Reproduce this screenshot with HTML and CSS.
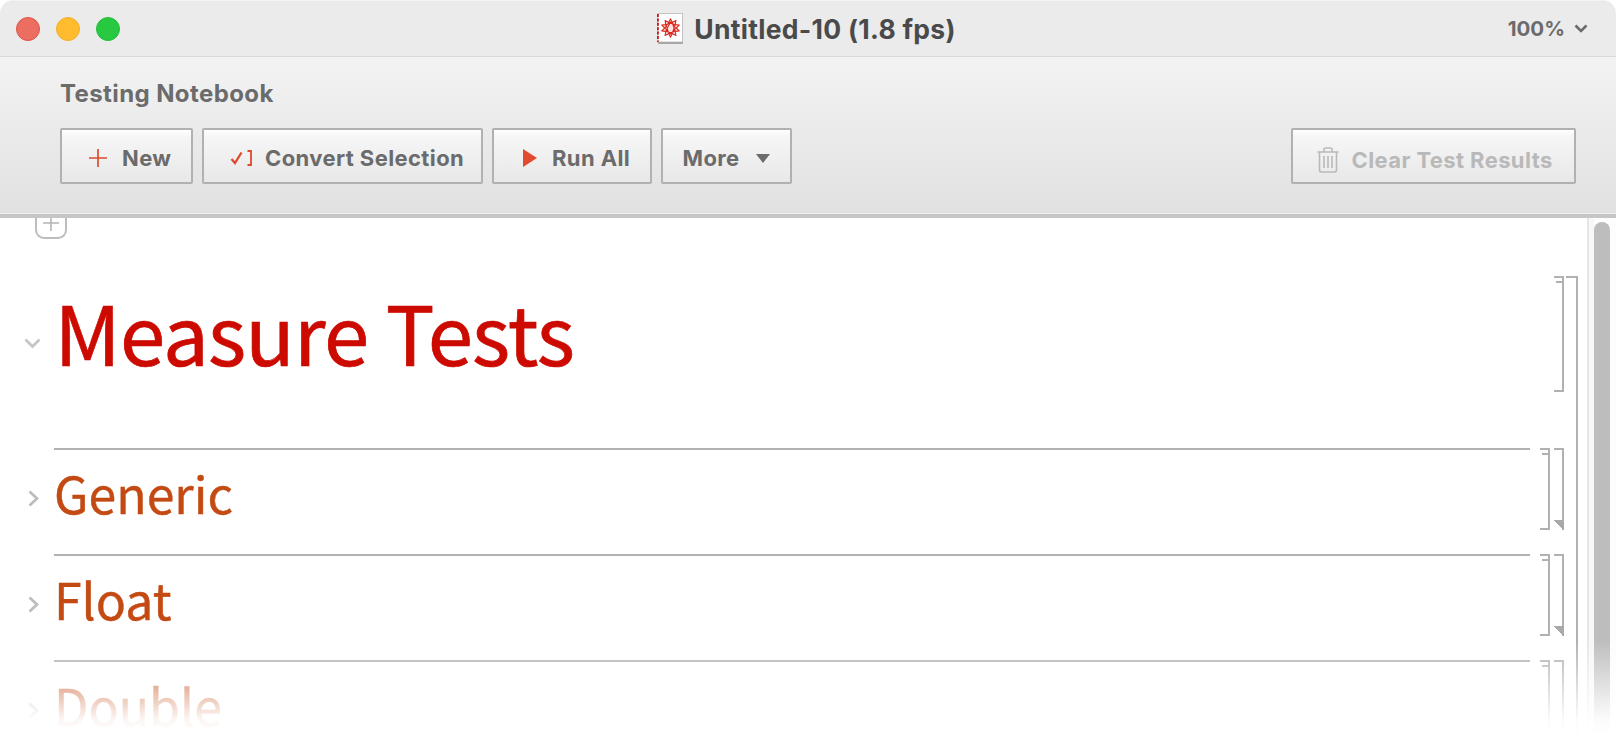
FILE: index.html
```html
<!DOCTYPE html>
<html lang="en">
<head>
<meta charset="utf-8">
<title>Untitled-10 (1.8 fps)</title>
<link rel="stylesheet" href="styles.css">
</head>
<body>
<div class="window">
  <header class="titlebar">
    <div class="lights">
      <span class="light close"></span>
      <span class="light minimize"></span>
      <span class="light zoom"></span>
    </div>
    <div class="doc-title">
      <svg class="doc-icon" width="26" height="31" viewBox="0 0 26 31">
        <rect x="1" y="0.5" width="24.500" height="28.5" fill="#fff" stroke="#c4c4c4"/>
        <rect x="1" y="29" width="25" height="2" fill="#a8a8a8"/>
        <path d="M0.8 1V29" stroke="#cc1414" stroke-width="2" stroke-dasharray="3 1.4"/>
        <g transform="translate(13.5 15) scale(.88) translate(-13.5 -15)" fill="#fbe3df" stroke="#d9281e" stroke-width="1.2" stroke-linejoin="round">
          <path d="M13.500 4.500L15.500 8.820 19.670 6.510 18.760 11.180 23.490 11.760 20 15 23.490 18.240 18.760 18.820 19.670 23.490 15.500 21.180 13.500 25.500 11.500 21.180 7.330 23.490 8.240 18.820 3.510 18.240 7 15 3.510 11.760 8.240 11.180 7.330 6.510 11.500 8.820z"/>
          <path d="M11.500 8.820L18.760 11.180 15.500 21.180 8.240 18.820 13.500 8 20 15 13.500 22 7 15zM8.240 11.180L15.500 8.820 18.760 18.820 11.500 21.180z" fill="none"/>
        </g>
      </svg>
      <span class="doc-name">Untitled-10 (1.8 fps)</span>
    </div>
    <div class="zoom-menu">
      <span>100%</span>
      <svg width="14" height="9" viewBox="0 0 14 9"><path d="M1.500 1.500L7 7l5.500-5.500" fill="none" stroke="#6b6b6b" stroke-width="2.600"/></svg>
    </div>
  </header>

  <section class="toolbar">
    <div class="toolbar-title">Testing Notebook</div>
    <div class="actions">
      <button class="btn btn-new">
        <svg width="18" height="18" viewBox="0 0 18 18"><path d="M9 0V18M0 9H18" stroke="#dd4a2e" stroke-width="1.7"/></svg>
        <span>New</span>
      </button>
      <button class="btn btn-convert">
        <svg width="22" height="18" viewBox="0 0 22 18"><path d="M1.500 10L5 14 11.500 3.500" fill="none" stroke="#dd4a2e" stroke-width="2.300"/><path d="M17.500 2H21V16H17.500" fill="none" stroke="#dd4a2e" stroke-width="1.800"/></svg>
        <span>Convert Selection</span>
      </button>
      <button class="btn btn-run">
        <svg width="14" height="18" viewBox="0 0 14 18"><path d="M0 0L14 9 0 18z" fill="#e04b2d"/></svg>
        <span>Run All</span>
      </button>
      <button class="btn btn-more">
        <span>More</span>
        <svg width="14" height="9" viewBox="0 0 14 9"><path d="M0 0H14L7 9z" fill="#6b6b6b"/></svg>
      </button>
      <button class="btn btn-clear">
        <svg width="22" height="26" viewBox="0 0 22 26" fill="none" stroke="#b9b9b9" stroke-width="1.600"><path d="M0.500 5H21.500M7 4.500V2.500Q7 1 8.500 1H13.500Q15 1 15 2.500V4.500M2.500 5.500V23Q2.500 25 4.500 25H17.500Q19.500 25 19.500 23V5.500M7 9V21M11 9V21M15 9V21"/></svg>
        <span>Clear Test Results</span>
      </button>
    </div>
  </section>

  <main class="notebook">
    <div class="sheet">
      <div class="cell-insert"><svg width="16" height="16" viewBox="0 0 16 16"><path d="M8 0V16M0 8H16" stroke="#b4b4b4" stroke-width="1.600"/></svg></div>
      <div class="group">
        <div class="title-row">
          <div class="gutter"><svg class="chev-down" width="17" height="11" viewBox="0 0 17 11"><path d="M1.500 1.500L8.500 8.500l7-7" fill="none" stroke="#c6c6c6" stroke-width="2.800"/></svg></div>
          <h1 class="title">Measure Tests</h1>
          <div class="bracket title-bracket"></div>
        </div>
        <div class="section-row">
          <div class="gutter"><svg class="chev-right" width="11" height="17" viewBox="0 0 11 17"><path d="M1.500 1.500L9 8.500l-7.500 7" fill="none" stroke="#bdbdbd" stroke-width="2.800"/></svg></div>
          <h2 class="section">Generic</h2>
          <div class="bracket inner"></div>
          <div class="bracket closed"></div>
        </div>
        <div class="section-row">
          <div class="gutter"><svg class="chev-right" width="11" height="17" viewBox="0 0 11 17"><path d="M1.500 1.500L9 8.500l-7.500 7" fill="none" stroke="#bdbdbd" stroke-width="2.800"/></svg></div>
          <h2 class="section">Float</h2>
          <div class="bracket inner"></div>
          <div class="bracket closed"></div>
        </div>
        <div class="section-row">
          <div class="gutter"><svg class="chev-right" width="11" height="17" viewBox="0 0 11 17"><path d="M1.500 1.500L9 8.500l-7.500 7" fill="none" stroke="#bdbdbd" stroke-width="2.800"/></svg></div>
          <h2 class="section">Double</h2>
          <div class="bracket inner"></div>
          <div class="bracket closed"></div>
        </div>
      </div>
    </div>
    <div class="scrollbar"><div class="thumb"></div></div>
    <div class="fade"></div>
  </main>
</div>
</body>
</html>
```

FILE: styles.css
```css
* { box-sizing: border-box; }
html, body { margin: 0; height: 100%; background: #fff; overflow: hidden; }
body { font-family: Inter, "Liberation Sans", sans-serif; }

.window {
  height: 750px;
  display: flex;
  flex-direction: column;
  border-radius: 14px 14px 0 0;
  overflow: hidden;
}

/* Title bar */
.titlebar {
  flex: none;
  height: 57px;
  display: grid;
  grid-template-columns: 1fr auto 1fr;
  align-items: center;
  background: #ebebeb;
  border-top: 1px solid #f3f3f3;
  border-bottom: 1px solid #dcd8d8;
  padding: 0 28px 0 16px;
}
.lights { display: flex; gap: 16px; }
.light { width: 24px; height: 24px; border-radius: 50%; border: 1px solid; }
.close { background: #ec6e60; border-color: #e0534a; }
.minimize { background: #febc2e; border-color: #f3b02a; }
.zoom { background: #28c840; border-color: #27bd3d; }
.doc-title { display: flex; align-items: center; gap: 11px; margin-left: 9px; }
.doc-icon { display: block; }
.doc-name { font-size: 26.5px; font-weight: 700; letter-spacing: 0.3px; color: #4a4a4a; line-height: 30px; }
.zoom-menu {
  justify-self: end;
  display: flex;
  align-items: center;
  gap: 9px;
  font-size: 20.5px;
  font-weight: 700;
  color: #6b6b6b;
}

/* Toolbar */
.toolbar {
  flex: none;
  height: 161px;
  padding: 23px 40.5px 0 60px;
  background: linear-gradient(#f3f3f3, #e1e1e1);
  border-bottom: 4px solid #c6c6c6;
  box-shadow: inset 0 -1px 0 #efefef;
}
.toolbar-title {
  font-size: 24px;
  font-weight: 700;
  line-height: 28px;
  letter-spacing: 0.4px;
  color: #6b6b6b;
}
.actions { display: flex; gap: 9px; margin-top: 20px; }
.btn {
  height: 56px;
  display: flex;
  align-items: center;
  border: 2px solid #b1b1b1;
  border-radius: 2px;
  background: linear-gradient(#fff, #f6f6f6 12%, #e8e8e8);
  font-family: inherit;
  font-size: 22px;
  font-weight: 700;
  letter-spacing: 0.4px;
  color: #6b6b6b;
  padding: 4px 0 0;
}
.btn-new { width: 133px; padding-left: 27px; gap: 15px; }
.btn-convert { width: 281px; padding-left: 26px; gap: 13px; }
.btn-run { width: 159.5px; padding-left: 29px; gap: 15px; }
.btn-more { width: 131.5px; padding-left: 20px; gap: 16px; }
.btn-clear { width: 285px; margin-left: auto; padding: 8px 0 0 24px; gap: 13px; color: #b9b9b9; }

/* Notebook */
.notebook {
  flex: 1;
  min-height: 0;
  display: flex;
  position: relative;
  background: #fff;
}
.sheet { flex: 1; min-width: 0; overflow: hidden; }
.cell-insert {
  width: 32px;
  height: 21px;
  margin-left: 35px;
  border: 2px solid #bdbdbd;
  border-top: 0;
  border-radius: 0 0 9px 9px;
  display: flex;
  justify-content: center;
  align-items: flex-start;
  overflow: hidden;
}
.cell-insert svg { margin-top: -3px; flex: none; }

.group {
  position: relative;
  width: 1578px;
  margin-top: 37px;
  padding-right: 12px;
  border-right: 2px solid #b1b1b1;
}
.group::before {
  content: "";
  position: absolute;
  top: 0;
  right: 0;
  width: 10px;
  height: 2px;
  background: #b1b1b1;
}

.title-row { display: flex; align-items: flex-start; height: 172px; }
.section-row { display: flex; align-items: flex-start; height: 106px; }
.gutter { flex: none; width: 54px; position: relative; }
.chev-down { position: absolute; left: 24px; top: 62px; }
.chev-right { position: absolute; left: 28px; top: 42px; }

.title {
  flex: 1;
  margin: 0;
  padding: 0 0 0 0.5px;
  font-family: "Noto Sans CJK SC", "Noto Sans", sans-serif;
  font-size: 81.5px;
  font-weight: 400;
  letter-spacing: -0.8px;
  line-height: 109px;
  -webkit-text-stroke: 0.7px #cc0a00;
  color: #cc0a00;
}
.section {
  flex: 1;
  margin: 0;
  height: 106px;
  padding: 12px 0 0 0;
  border-top: 2px solid #b1b1b1;
  font-family: "Noto Sans CJK SC", "Noto Sans", sans-serif;
  font-size: 50px;
  font-weight: 400;
  line-height: 60px;
  -webkit-text-stroke: 0.4px #c44a14;
  color: #c44a14;
}

.bracket {
  position: relative;
  flex: none;
  width: 10px;
  border: 2px solid #b1b1b1;
  border-left: 0;
}
.title-bracket { height: 116px; }
.title-bracket::before, .inner::before {
  content: "";
  position: absolute;
  top: 3px;
  right: 0;
  width: 6px;
  height: 2px;
  background: #b1b1b1;
}
.inner { height: 82px; margin-left: 10px; }
.closed { height: 82px; margin-left: 4px; border-bottom: 0; }
.closed::after {
  content: "";
  position: absolute;
  right: -2px;
  bottom: 0;
  width: 10px;
  height: 10px;
  background: linear-gradient(to top right, transparent 50%, #a9a9a9 50%);
}

.scrollbar {
  flex: none;
  width: 29px;
  padding: 4px 6px 0 5px;
  border-left: 2px solid #e6e6e6;
  background: linear-gradient(to right, #f7f7f7 5px, #fdfdfd 5px);
}
.thumb {
  height: 100%;
  background: #bdbdbd;
  border-radius: 8px 8px 0 0;
}

.fade {
  position: absolute;
  left: 0;
  right: 0;
  bottom: 0;
  height: 110px;
  background: linear-gradient(rgba(255,255,255,0), rgba(255,255,255,.6) 45%, rgba(255,255,255,.95) 72%, #fff 88%);
  pointer-events: none;
}
```
